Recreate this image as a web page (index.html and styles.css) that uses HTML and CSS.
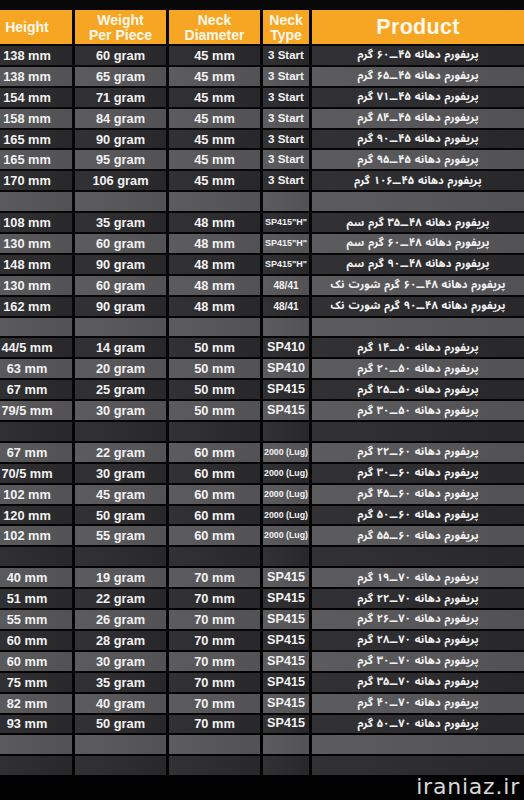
FILE: index.html
```html
<!DOCTYPE html>
<html lang="en">
<head>
<meta charset="utf-8">
<title>Preform table</title>
<link rel="stylesheet" href="styles.css">
</head>
<body>
<div class="page">
  <div class="table">
    <div class="row head">
      <div class="cell">Height</div>
      <div class="cell"><span class="two">Weight<br>Per Piece</span></div>
      <div class="cell"><span class="two">Neck<br>Diameter</span></div>
      <div class="cell"><span class="two">Neck<br>Type</span></div>
      <div class="cell product-head">Product</div>
    </div>

    <div class="row dark"><div class="cell">138 mm</div><div class="cell">60 gram</div><div class="cell">45 mm</div><div class="cell nt">3 Start</div><div class="cell fa" dir="rtl">پریفورم دهانه ۴۵ــ۶۰ گرم</div></div>
    <div class="row light"><div class="cell">138 mm</div><div class="cell">65 gram</div><div class="cell">45 mm</div><div class="cell nt">3 Start</div><div class="cell fa" dir="rtl">پریفورم دهانه ۴۵ــ۶۵ گرم</div></div>
    <div class="row dark"><div class="cell">154 mm</div><div class="cell">71 gram</div><div class="cell">45 mm</div><div class="cell nt">3 Start</div><div class="cell fa" dir="rtl">پریفورم دهانه ۴۵ــ۷۱ گرم</div></div>
    <div class="row light"><div class="cell">158 mm</div><div class="cell">84 gram</div><div class="cell">45 mm</div><div class="cell nt">3 Start</div><div class="cell fa" dir="rtl">پریفورم دهانه ۴۵ــ۸۴ گرم</div></div>
    <div class="row dark"><div class="cell">165 mm</div><div class="cell">90 gram</div><div class="cell">45 mm</div><div class="cell nt">3 Start</div><div class="cell fa" dir="rtl">پریفورم دهانه ۴۵ــ۹۰ گرم</div></div>
    <div class="row light"><div class="cell">165 mm</div><div class="cell">95 gram</div><div class="cell">45 mm</div><div class="cell nt">3 Start</div><div class="cell fa" dir="rtl">پریفورم دهانه ۴۵ــ۹۵ گرم</div></div>
    <div class="row dark"><div class="cell">170 mm</div><div class="cell">106 gram</div><div class="cell">45 mm</div><div class="cell nt">3 Start</div><div class="cell fa" dir="rtl">پریفورم دهانه ۴۵ــ۱۰۶ گرم</div></div>
    <div class="row light"><div class="cell"></div><div class="cell"></div><div class="cell"></div><div class="cell"></div><div class="cell"></div></div>

    <div class="row dark"><div class="cell">108 mm</div><div class="cell">35 gram</div><div class="cell">48 mm</div><div class="cell nt-xs">SP415"H"</div><div class="cell fa" dir="rtl">پریفورم دهانه ۴۸ــ۳۵ گرم سم</div></div>
    <div class="row light"><div class="cell">130 mm</div><div class="cell">60 gram</div><div class="cell">48 mm</div><div class="cell nt-xs">SP415"H"</div><div class="cell fa" dir="rtl">پریفورم دهانه ۴۸ــ۶۰ گرم سم</div></div>
    <div class="row dark"><div class="cell">148 mm</div><div class="cell">90 gram</div><div class="cell">48 mm</div><div class="cell nt-xs">SP415"H"</div><div class="cell fa" dir="rtl">پریفورم دهانه ۴۸ــ۹۰ گرم سم</div></div>
    <div class="row light"><div class="cell">130 mm</div><div class="cell">60 gram</div><div class="cell">48 mm</div><div class="cell nt-sm">48/41</div><div class="cell fa" dir="rtl">پریفورم دهانه ۴۸ــ۶۰ گرم شورت نک</div></div>
    <div class="row dark"><div class="cell">162 mm</div><div class="cell">90 gram</div><div class="cell">48 mm</div><div class="cell nt-sm">48/41</div><div class="cell fa" dir="rtl">پریفورم دهانه ۴۸ــ۹۰ گرم شورت نک</div></div>
    <div class="row light"><div class="cell"></div><div class="cell"></div><div class="cell"></div><div class="cell"></div><div class="cell"></div></div>

    <div class="row dark"><div class="cell">44/5 mm</div><div class="cell">14 gram</div><div class="cell">50 mm</div><div class="cell nt-lg">SP410</div><div class="cell fa" dir="rtl">پریفورم دهانه ۵۰ــ۱۴ گرم</div></div>
    <div class="row light"><div class="cell">63 mm</div><div class="cell">20 gram</div><div class="cell">50 mm</div><div class="cell nt-lg">SP410</div><div class="cell fa" dir="rtl">پریفورم دهانه ۵۰ــ۲۰ گرم</div></div>
    <div class="row dark"><div class="cell">67 mm</div><div class="cell">25 gram</div><div class="cell">50 mm</div><div class="cell nt-lg">SP415</div><div class="cell fa" dir="rtl">پریفورم دهانه ۵۰ــ۲۵ گرم</div></div>
    <div class="row light"><div class="cell">79/5 mm</div><div class="cell">30 gram</div><div class="cell">50 mm</div><div class="cell nt-lg">SP415</div><div class="cell fa" dir="rtl">پریفورم دهانه ۵۰ــ۳۰ گرم</div></div>
    <div class="row dark"><div class="cell"></div><div class="cell"></div><div class="cell"></div><div class="cell"></div><div class="cell"></div></div>

    <div class="row light"><div class="cell">67 mm</div><div class="cell">22 gram</div><div class="cell">60 mm</div><div class="cell nt-lug">2000 (Lug)</div><div class="cell fa" dir="rtl">پریفورم دهانه ۶۰ــ۲۲ گرم</div></div>
    <div class="row dark"><div class="cell">70/5 mm</div><div class="cell">30 gram</div><div class="cell">60 mm</div><div class="cell nt-lug">2000 (Lug)</div><div class="cell fa" dir="rtl">پریفورم دهانه ۶۰ــ۳۰ گرم</div></div>
    <div class="row light"><div class="cell">102 mm</div><div class="cell">45 gram</div><div class="cell">60 mm</div><div class="cell nt-lug">2000 (Lug)</div><div class="cell fa" dir="rtl">پریفورم دهانه ۶۰ــ۴۵ گرم</div></div>
    <div class="row dark"><div class="cell">120 mm</div><div class="cell">50 gram</div><div class="cell">60 mm</div><div class="cell nt-lug">2000 (Lug)</div><div class="cell fa" dir="rtl">پریفورم دهانه ۶۰ــ۵۰ گرم</div></div>
    <div class="row light"><div class="cell">102 mm</div><div class="cell">55 gram</div><div class="cell">60 mm</div><div class="cell nt-lug">2000 (Lug)</div><div class="cell fa" dir="rtl">پریفورم دهانه ۶۰ــ۵۵ گرم</div></div>
    <div class="row dark"><div class="cell"></div><div class="cell"></div><div class="cell"></div><div class="cell"></div><div class="cell"></div></div>

    <div class="row light"><div class="cell">40 mm</div><div class="cell">19 gram</div><div class="cell">70 mm</div><div class="cell nt-lg">SP415</div><div class="cell fa" dir="rtl">پریفورم دهانه ۷۰ــ۱۹ گرم</div></div>
    <div class="row dark"><div class="cell">51 mm</div><div class="cell">22 gram</div><div class="cell">70 mm</div><div class="cell nt-lg">SP415</div><div class="cell fa" dir="rtl">پریفورم دهانه ۷۰ــ۲۲ گرم</div></div>
    <div class="row light"><div class="cell">55 mm</div><div class="cell">26 gram</div><div class="cell">70 mm</div><div class="cell nt-lg">SP415</div><div class="cell fa" dir="rtl">پریفورم دهانه ۷۰ــ۲۶ گرم</div></div>
    <div class="row dark"><div class="cell">60 mm</div><div class="cell">28 gram</div><div class="cell">70 mm</div><div class="cell nt-lg">SP415</div><div class="cell fa" dir="rtl">پریفورم دهانه ۷۰ــ۲۸ گرم</div></div>
    <div class="row light"><div class="cell">60 mm</div><div class="cell">30 gram</div><div class="cell">70 mm</div><div class="cell nt-lg">SP415</div><div class="cell fa" dir="rtl">پریفورم دهانه ۷۰ــ۳۰ گرم</div></div>
    <div class="row dark"><div class="cell">75 mm</div><div class="cell">35 gram</div><div class="cell">70 mm</div><div class="cell nt-lg">SP415</div><div class="cell fa" dir="rtl">پریفورم دهانه ۷۰ــ۳۵ گرم</div></div>
    <div class="row light"><div class="cell">82 mm</div><div class="cell">40 gram</div><div class="cell">70 mm</div><div class="cell nt-lg">SP415</div><div class="cell fa" dir="rtl">پریفورم دهانه ۷۰ــ۴۰ گرم</div></div>
    <div class="row dark"><div class="cell">93 mm</div><div class="cell">50 gram</div><div class="cell">70 mm</div><div class="cell nt-lg">SP415</div><div class="cell fa" dir="rtl">پریفورم دهانه ۷۰ــ۵۰ گرم</div></div>
    <div class="row light"><div class="cell"></div><div class="cell"></div><div class="cell"></div><div class="cell"></div><div class="cell"></div></div>
    <div class="row dark"><div class="cell"></div><div class="cell"></div><div class="cell"></div><div class="cell"></div><div class="cell"></div></div>
  </div>
  <div class="watermark">iraniaz.ir</div>
</div>
</body>
</html>
```

FILE: styles.css
```css
* { box-sizing: border-box; }

html, body {
  margin: 0;
  padding: 0;
  background: #030303;
  overflow: hidden;
}

.page {
  width: 524px;
  height: 800px;
  background: linear-gradient(#080808, #020202);
  overflow: hidden;
}

.table {
  display: grid;
  grid-template-columns: 90px 91px 91px 46px 212px;
  grid-template-rows: 34px repeat(35, 18.9px);
  column-gap: 3px;
  row-gap: 2px;
  margin-left: -18px;
  padding-top: 10px;
  font-family: "Liberation Sans", Arial, sans-serif;
  font-weight: bold;
  color: #f2f2f2;
}

.row { display: contents; }

.cell {
  display: flex;
  align-items: center;
  justify-content: center;
  text-align: center;
  font-size: 12.8px;
  line-height: 15px;
  white-space: nowrap;
  overflow: hidden;
}

.head .cell {
  background: #f6a623;
  color: #fdf8ec;
  font-size: 14px;
  line-height: 15px;
}

.head .two {
  display: block;
  line-height: 14.5px;
  padding-top: 1px;
}

.head .product-head {
  font-size: 21.5px;
  line-height: 24px;
  letter-spacing: 0.3px;
}

.dark .cell {
  background: linear-gradient(90deg, #323235, #28282b);
}

.light .cell {
  background: linear-gradient(90deg, #5c5c5f, #525255);
}

.nt { font-size: 11.5px; }
.nt-lg { font-size: 12.6px; }
.nt-sm { font-size: 10px; }
.nt-xs { font-size: 9px; }
.nt-lug { font-size: 8.8px; }

.fa {
  font-family: "Noto Sans Arabic", "Vazirmatn", "DejaVu Sans", sans-serif;
  font-size: 11px;
  font-weight: bold;
  word-spacing: 1px;
  line-height: 14px;
  overflow: visible;
}

.watermark {
  text-align: right;
  padding-right: 4px;
  margin-top: 1px;
  font-family: "DejaVu Sans", sans-serif;
  font-weight: normal;
  font-size: 22px;
  letter-spacing: 0.8px;
  color: #d8d8d8;
  line-height: 22px;
}
```
